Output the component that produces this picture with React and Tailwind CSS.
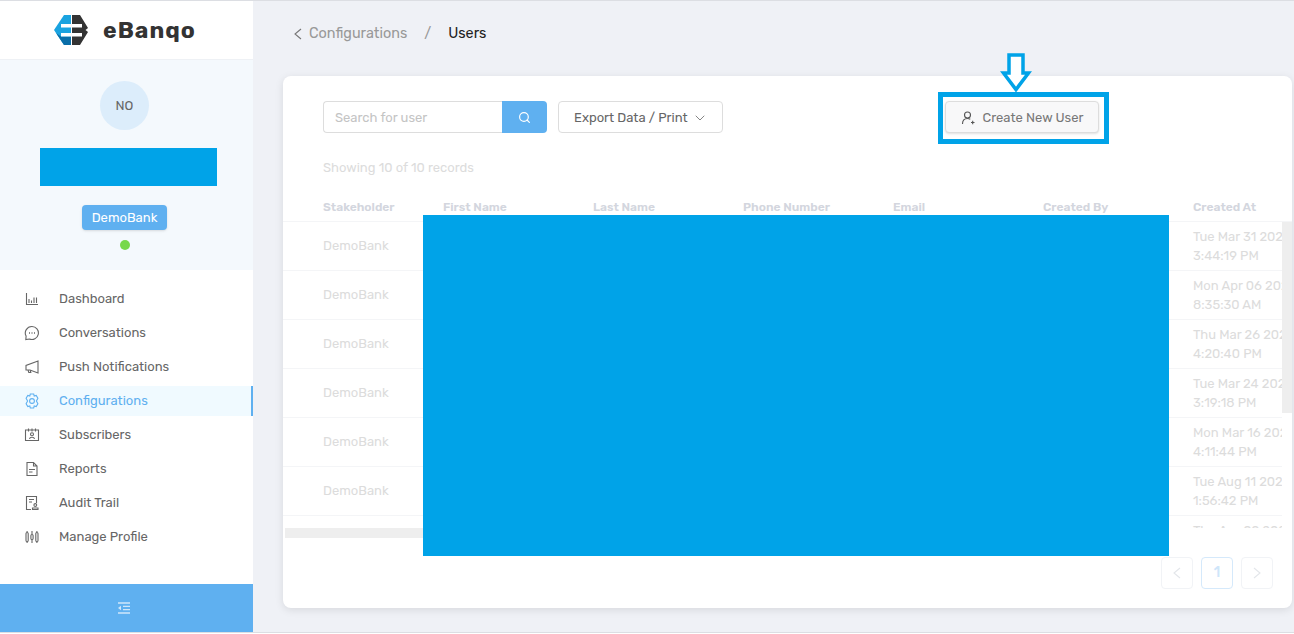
import { ChevronDown, Search } from "lucide-react";

const font = "font-['Rubik','Roboto','Liberation_Sans',sans-serif]";

function Icon({ children }) {
  return (
    <svg width="16" height="16" viewBox="0 0 16 16" fill="none" stroke="currentColor" strokeWidth="1.1" className="shrink-0">
      {children}
    </svg>
  );
}

function Chevron({ left }) {
  return (
    <svg width="8" height="12" viewBox="0 0 8 12" fill="none" stroke="currentColor" strokeWidth="1.1">
      <path d={left ? "M7 1 1 6l6 5" : "M1 1l6 5-6 5"} />
    </svg>
  );
}

const navItems = [
  {
    label: "Dashboard",
    icon: (
      <Icon>
        <path d="M2.500 2v11.500H14M5 12V8M7.500 12V9.500M10 12V6.500M12.500 12V6.500" />
      </Icon>
    ),
  },
  {
    label: "Conversations",
    icon: (
      <Icon>
        <path d="M8 1.500a6.500 6.500 0 1 1-2.600 12.500L1.800 14.600l.3-3.500A6.500 6.500 0 0 1 8 1.500Z" />
        <path d="M5 8h1M7.500 8h1M10 8h1" strokeWidth="1.400" />
      </Icon>
    ),
  },
  {
    label: "Push Notifications",
    icon: (
      <Icon>
        <path d="M14 2v12L6 11H2V6.500L14 2ZM4 11l.8 2.500h2L6.300 11.500" />
      </Icon>
    ),
  },
  {
    label: "Configurations",
    active: true,
    icon: (
      <Icon>
        <path d="M6.300 1h3.400l.5 2 2-.6 1.700 2.900L12.400 8l1.500 2.700-1.700 2.900-2-.6-.5 2H6.300l-.5-2-2 .6-1.700-2.900L3.600 8 2.100 5.300l1.700-2.900 2 .6.5-2Z" />
        <circle cx="8" cy="8" r="2.400" />
      </Icon>
    ),
  },
  {
    label: "Subscribers",
    icon: (
      <Icon>
        <path d="M1.500 3h13v10.500h-13ZM4.500 1.500v3M8 1.500v3M11.500 1.500v3" />
        <circle cx="8" cy="7.300" r="1.500" />
        <path d="M5.500 12c.3-2.400 4.700-2.400 5 0" />
      </Icon>
    ),
  },
  {
    label: "Reports",
    icon: (
      <Icon>
        <path d="M3 1.500h6.500L13 5v9.500H3ZM9.500 1.500V5H13M5 8.500h6M5 11h3.500" />
      </Icon>
    ),
  },
  {
    label: "Audit Trail",
    icon: (
      <Icon>
        <path d="M7 14.500H2.500v-13h10V8M5 4.500h5M5 7h3" />
        <circle cx="11.300" cy="10" r="1.400" />
        <path d="M8.500 14.500V13h5.500v1.500Z" />
      </Icon>
    ),
  },
  {
    label: "Manage Profile",
    icon: (
      <Icon>
        <rect x="2" y="3.500" width="2.200" height="9" rx="1.100" />
        <rect x="6.900" y="5.500" width="2.200" height="5" rx="1.100" />
        <rect x="11.800" y="3.500" width="2.200" height="9" rx="1.100" />
        <path d="M3.100 2v1.500M3.100 12.500V14M8 2v3.500M8 10.500V14M12.900 2v1.500M12.900 12.500V14" />
      </Icon>
    ),
  },
];

const rows = [
  ["Tue Mar 31 2020", "3:44:19 PM"],
  ["Mon Apr 06 2020", "8:35:30 AM"],
  ["Thu Mar 26 2020", "4:20:40 PM"],
  ["Tue Mar 24 2020", "3:19:18 PM"],
  ["Mon Mar 16 2020", "4:11:44 PM"],
  ["Tue Aug 11 2020", "1:56:42 PM"],
  ["Thu Apr 09 2020", "2:10:05 PM"],
];

const columns = [
  ["Stakeholder", "w-[120px]"],
  ["First Name", "w-[150px]"],
  ["Last Name", "w-[150px]"],
  ["Phone Number", "w-[150px]"],
  ["Email", "w-[150px]"],
  ["Created By", "w-[150px]"],
  ["Created At", "w-[150px]"],
];

function Sidebar() {
  return (
    <aside className="flex w-[253px] shrink-0 flex-col bg-white">
      <div className="flex h-[58px] items-center gap-[15px] pl-[54px]">
        <svg width="34" height="30" viewBox="0 0 34 30">
          <path d="M10 0H17V30H10L0 15Z" fill="#1aa3e0" />
          <path d="M2 18 10 30H17V21.500H7Z" fill="#0a6ea8" />
          <path d="M18 0H26L34 13 31.500 15 34 17 26 30H18Z" fill="#333" />
          <path d="M7 9H17V12.500H7ZM7 18H17V21.500H7ZM18 9H28V12.500H18ZM18 18H28V21.500H18Z" fill="white" />
        </svg>
        <span className="text-[23px] leading-none font-bold tracking-[1px] text-[#333]">eBanqo</span>
      </div>
      <div className="flex h-[211px] flex-col items-center border-t border-[#eef1f5] bg-[#f4f9fd] pt-[21px] pr-1">
        <div className="flex h-[49px] w-[49px] items-center justify-center rounded-full bg-[#dcedfb] text-[13px] text-[#666]">
          NO
        </div>
        <div className="mt-[18px] ml-2 h-[38px] w-[177px] bg-[#00a3e8]" />
        <div className="mt-[19px] flex h-[25px] w-[85px] items-center justify-center rounded bg-[#5fb0f0] text-[13px] text-white shadow-sm">
          DemoBank
        </div>
        <div className="mt-[10px] h-[10px] w-[10px] rounded-full bg-[#77d84a]" />
      </div>
      <nav className="flex flex-1 flex-col pt-[12px]">
        {navItems.map((item) => (
          <div
            key={item.label}
            className={`flex h-[34px] items-center text-[13px] ${
              item.active ? "text-[#5fb0f0]" : "text-[#666]"
            }`}
          >
            <div
              className={`flex h-[30px] flex-1 items-center gap-[19px] pl-6 ${
                item.active ? "border-r-2 border-[#5fb0f0] bg-[#f0faff]" : ""
              }`}
            >
              {item.icon}
              <span>{item.label}</span>
            </div>
          </div>
        ))}
      </nav>
      <div className="flex h-[48px] items-center justify-center bg-[#5fb0f0] pr-[5px]">
        <svg width="14" height="12" viewBox="0 0 14 12" stroke="#cfe6fa" strokeWidth="1.300" fill="none">
          <path d="M1 1h12M6 4.300h7M6 7.700h7M1 11h12" />
          <path d="M4 3.800v4.400L1 6Z" fill="#cfe6fa" stroke="none" />
        </svg>
      </div>
    </aside>
  );
}

function UsersTable() {
  return (
    <div className="mt-[22px]">
      <div className="flex h-[23px] overflow-hidden border-b border-[#f4f5f7] pl-10">
        {columns.map(([name, width]) => (
          <div key={name} className={`${width} shrink-0 text-xs font-semibold text-[#d3d6de]`}>
            {name}
          </div>
        ))}
      </div>
      <div className="flex h-[306px]">
        <div className="w-[999px] overflow-hidden">
          {rows.map(([date, time], i) => (
            <div key={i} className="flex h-[49px] items-center border-b border-[#f4f5f7] pb-px pl-10 text-[13px] leading-[19px] text-[#dcdcdc]">
              <div className="w-[870px] shrink-0">DemoBank</div>
              <div className="w-[150px] shrink-0 whitespace-nowrap">
                {date}
                <br />
                {time}
              </div>
            </div>
          ))}
        </div>
        <div className="w-[10px]">
          <div className="h-[191px] bg-[#eeeeee]" />
        </div>
      </div>
      <div className="ml-[2px] h-[10px] w-[500px] bg-[#eeeeee]" />
    </div>
  );
}

function Pagination() {
  return (
    <div className="mt-[19px] flex justify-end gap-2 pr-[19px]">
      <div className="flex h-8 w-8 items-center justify-center rounded border border-[#f1f3f6] text-[#e3e6ea]">
        <Chevron left />
      </div>
      <div className="flex h-8 w-8 items-center justify-center rounded border border-[#d5e9fb] text-sm font-medium text-[#cfe6fa]">
        1
      </div>
      <div className="flex h-8 w-8 items-center justify-center rounded border border-[#f1f3f6] text-[#e3e6ea]">
        <Chevron />
      </div>
    </div>
  );
}

export default function App() {
  return (
    <div className={`${font} h-[634px] w-[1294px] overflow-hidden bg-white`}>
      <div className="flex h-[633px] border-y border-[#dcdee3] bg-[#eff1f6]">
        <Sidebar />
        <main className="flex-1 pl-[30px]">
          <div className="flex h-[75px] items-center pb-[9px] text-[14.4px]">
            <span className="mr-[7px] ml-[11px] text-[#777]">
              <Chevron left />
            </span>
            <span className="text-[#999]">Configurations</span>
            <span className="mx-[17px] text-[#999]">/</span>
            <span className="text-[#222]">Users</span>
          </div>
          <div className="relative h-[532px] w-[1009px] rounded-lg bg-white shadow-[0_2px_8px_rgba(0,0,0,0.1)]">
            <div className="flex pt-[25px] pl-10 text-[13px]">
              <div className="flex h-8 w-[224px]">
                <div className="flex flex-1 items-center rounded-l border border-r-0 border-[#dddddd] pt-px pl-[11px] text-[#c4c4c4]">
                  Search for user
                </div>
                <div className="flex w-[45px] items-center justify-center rounded-r bg-[#5fb0f0] text-white">
                  <Search size={13} strokeWidth={2.2} />
                </div>
              </div>
              <div className="ml-[11px] flex h-8 w-[165px] items-center justify-between rounded border border-[#dddddd] pt-px pr-[14px] pl-[15px] text-[#666]">
                Export Data / Print
                <ChevronDown size={16} strokeWidth={1.2} />
              </div>
              <div className="ml-[222px] flex h-8 w-[154px] items-center justify-center gap-[8px] rounded border border-[#dddddd] bg-[#f8f8f9] pt-px text-[#777] shadow-sm">
                <svg width="14" height="14" viewBox="0 0 14 14" fill="none" stroke="#555" strokeWidth="1.100">
                  <circle cx="6.500" cy="4" r="3" />
                  <path d="M1.500 13c0-3.500 2-5.500 5-5.500 1.200 0 2 .3 2.800 .8M10 11.500h3.500M11.700 9.800v3.400" />
                </svg>
                Create New User
              </div>
            </div>
            <p className="mt-[26px] pl-10 text-[13px] leading-[18px] text-[#dcdcdc]">Showing 10 of 10 records</p>
            <UsersTable />
            <Pagination />
            {/* redaction and callout drawn over the page */}
            <div className="absolute top-[139px] left-[140px] h-[341px] w-[746px] bg-[#00a3e8]" />
            <div className="absolute top-[16px] left-[655px] h-[52px] w-[171px] border-[5px] border-[#00a3e8]" />
            <svg className="absolute -top-[23px] left-[717px]" width="32" height="40" viewBox="0 0 32 40" fill="white" stroke="#00a3e8" strokeWidth="3.500">
              <path d="M9 2H23V20H28.500L16 36.500 3.500 20H9Z" />
            </svg>
          </div>
        </main>
      </div>
    </div>
  );
}
